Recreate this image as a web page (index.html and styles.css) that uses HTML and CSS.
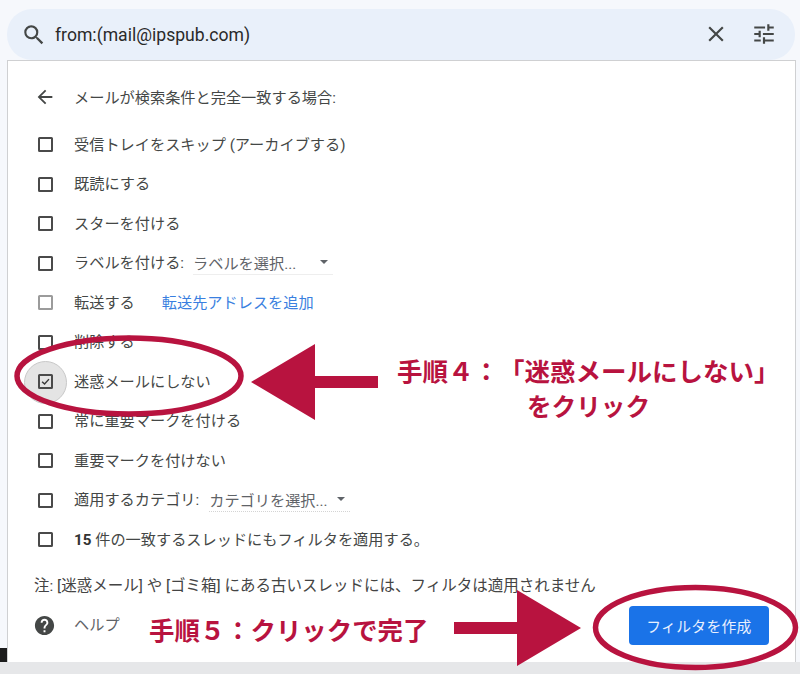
FILE: index.html
```html
<!DOCTYPE html>
<html lang="ja">
<head>
<meta charset="utf-8">
<title>フィルタを作成</title>
<link rel="stylesheet" href="styles.css">
</head>
<body>
<div class="edge"></div>
<div class="search">
  <svg class="ico-search" viewBox="0 0 24 24"><path d="M15.5 14h-.79l-.28-.27A6.47 6.47 0 0 0 16 9.5 6.5 6.5 0 1 0 9.5 16c1.61 0 3.09-.59 4.23-1.57l.27.28v.79l5 4.99L20.49 19l-4.99-5zm-6 0C7.01 14 5 11.99 5 9.5S7.01 5 9.5 5 14 7.01 14 9.5 11.99 14 9.5 14z"/></svg>
  <span class="query">from:(mail@ipspub.com)</span>
  <svg class="ico-close" viewBox="0 0 24 24"><path d="M19 6.41 17.59 5 12 10.59 6.41 5 5 6.41 10.59 12 5 17.59 6.41 19 12 13.41 17.59 19 19 17.59 13.41 12z"/></svg>
  <svg class="ico-tune" viewBox="0 0 24 24"><path d="M3 17v2h6v-2H3zM3 5v2h10V5H3zm10 16v-2h8v-2h-8v-2h-2v6h2zM7 9v2H3v2h4v2h2V9H7zm14 4v-2H11v2h10zm-6-4h2V7h4V5h-4V3h-2v6z"/></svg>
</div>
<main class="panel">
  <div class="head">
    <svg class="ico-back" viewBox="0 0 24 24"><path d="M20 11H7.83l5.59-5.59L12 4l-8 8 8 8 1.41-1.41L7.83 13H20v-2z"/></svg>
    <span>メールが検索条件と完全一致する場合:</span>
  </div>
  <ul class="rows">
    <li class="row"><span class="box"></span><span>受信トレイをスキップ (アーカイブする)</span></li>
    <li class="row"><span class="box"></span><span>既読にする</span></li>
    <li class="row"><span class="box"></span><span>スターを付ける</span></li>
    <li class="row"><span class="box"></span><span>ラベルを付ける:</span><span class="select label-select">ラベルを選択...<i class="caret"></i></span></li>
    <li class="row"><span class="box box-off"></span><span>転送する</span><span class="link">転送先アドレスを追加</span></li>
    <li class="row"><span class="box"></span><span>削除する</span></li>
    <li class="row"><span class="halo"></span><span class="box box-on"><svg viewBox="0 0 12 12"><path d="M2.3 6.2 5 8.8 9.8 3.4"/></svg></span><span>迷惑メールにしない</span></li>
    <li class="row"><span class="box"></span><span>常に重要マークを付ける</span></li>
    <li class="row"><span class="box"></span><span>重要マークを付けない</span></li>
    <li class="row"><span class="box"></span><span>適用するカテゴリ:</span><span class="select cat-select">カテゴリを選択...<i class="caret"></i></span></li>
    <li class="row"><span class="box"></span><span><b>15</b> 件の一致するスレッドにもフィルタを適用する。</span></li>
  </ul>
  <p class="note">注: [迷惑メール] や [ゴミ箱] にある古いスレッドには、フィルタは適用されません</p>
  <div class="foot">
    <svg class="ico-help" viewBox="0 0 24 24"><path d="M12 2C6.48 2 2 6.48 2 12s4.48 10 10 10 10-4.48 10-10S17.52 2 12 2zm1 17h-2v-2h2v2zm2.07-7.75-.9.92C13.45 12.9 13 13.5 13 15h-2v-.5c0-1.1.45-2.1 1.17-2.83l1.24-1.26c.37-.36.59-.86.59-1.41 0-1.1-.9-2-2-2s-2 .9-2 2H8c0-2.21 1.79-4 4-4s4 1.79 4 4c0 .88-.36 1.68-.93 2.25z"/></svg>
    <span class="help">ヘルプ</span>
    <span class="create">フィルタを作成</span>
  </div>
</main>
<div class="bottom"></div>
<svg class="marks" viewBox="0 0 800 674">
  <ellipse class="ring" cx="129" cy="376" rx="112" ry="38"/>
  <ellipse class="ring" cx="695.5" cy="627.5" rx="100" ry="40"/>
  <path class="arrow" d="M251 382 315 344V376H378V388H315V420Z"/>
  <path class="arrow" d="M581 628 517 590V622H454V634H517V666Z"/>
</svg>
<div class="step step4"><span class="step4a">手順４：「迷惑メールにしない」</span><br><span class="step4b">をクリック</span></div>
<div class="step step5">手順５：クリックで完了</div>
</body>
</html>
```
FILE: styles.css
```css
* { box-sizing: border-box; }
html, body { margin: 0; height: 674px; overflow: hidden; }
body {
  position: relative;
  background: #f6f8fc;
  padding: 9px 4px 0 7px;
  font-family: Roboto, "Noto Sans CJK JP", sans-serif;
  color: #444746;
  text-spacing-trim: space-all;
}
svg { display: block; fill: #444746; flex: none; }

.edge { position: absolute; left: 0; top: 648px; width: 7px; height: 22px; background: #1c1c1c; }

.search {
  height: 51px;
  display: flex;
  align-items: center;
  background: #e9f0fa;
  border-radius: 25px;
  padding: 0 18px 0 14px;
  margin-right: 1px;
}
.ico-search { width: 26px; height: 26px; margin-right: 8px; }
.query { font-size: 17.6px; color: #2a2a2a; flex: 1; }
.ico-close { width: 26px; height: 26px; margin-right: 22px; position: relative; top: -1px; }
.ico-tune { width: 26px; height: 26px; position: relative; top: -1px; }

.panel {
  height: 602px;
  background: #fff;
  border: 1px solid #cfd0d2;
  border-bottom: 0;
  font-size: 15.2px;
  display: flex;
  flex-direction: column;
}
.head { height: 74px; padding: 0 0 0 26px; display: flex; align-items: center; position: relative; }
.head span { margin-left: 19px; position: relative; top: -2px; }
.ico-back { width: 22px; height: 22px; margin-right: -1px; position: relative; top: -1px; }

.rows { list-style: none; margin: 0; padding: 0; position: relative; top: -12px; }
.row { height: 39.5px; display: flex; align-items: center; padding-left: 30px; position: relative; }
.box {
  width: 15px; height: 15px;
  border: 2px solid #4a4a4a;
  border-radius: 1.5px;
  margin-right: 21px;
  flex: none;
  position: relative;
  top: 2px;
}
.box-off { border-color: #9b9b9b; }
.box-on svg { width: 11px; height: 11px; fill: none; stroke: #3a3a3a; stroke-width: 1.6; }
.halo {
  position: absolute;
  left: 16px; top: 1px;
  width: 43px; height: 43px;
  border-radius: 50%;
  background: #e4e4e4;
  border: 1px solid #c8c8c8;
}
.select {
  display: flex;
  align-items: center;
  height: 25px;
  color: #5f6368;
  border-bottom: 1px solid #eeeeee;
  margin-left: 9px;
  position: relative;
  top: 1px;
}
.label-select { width: 140px; }
.cat-select { width: 141px; margin-left: 10px; border-bottom: 1px dotted #d4d4d4; }
.caret {
  width: 0; height: 0;
  border-left: 4px solid transparent;
  border-right: 4px solid transparent;
  border-top: 4px solid #5f6368;
  margin-left: auto;
  margin-right: 5px;
}
.link { color: #3a7fe0; margin-left: 27px; }
b { font-weight: 700; color: #333; }

.note { margin: 5px 0 0 26px; height: 22px; line-height: 22px; font-size: 15.5px; color: #444; white-space: nowrap; }
.foot { height: 60px; display: flex; align-items: center; padding-left: 26px; padding-right: 26px; }
.ico-help { width: 23px; height: 23px; margin-left: -1px; position: relative; top: -1px; }
.help { margin-left: 18px; color: #5f6368; position: relative; top: -4px; }
.create {
  margin-left: auto;
  width: 140px; height: 39px;
  background: #1a73e8;
  border-radius: 4px;
  color: #e8f0fe;
  font-size: 14.8px;
  letter-spacing: .3px;
  display: flex;
  align-items: center;
  justify-content: center;
  position: relative;
  top: -1px;
}
.bottom { position: absolute; left: 0; right: 0; top: 662px; height: 12px; background: #e6e7e9; }

.marks { position: absolute; left: 0; top: 0; width: 800px; height: 674px; fill: none; pointer-events: none; }
.ring { fill: none; stroke: #b8133f; stroke-width: 5.5; }
.arrow { fill: #b8133f; }
.step { position: absolute; color: #b8133f; font-weight: 700; white-space: nowrap; }
.step4 { left: 397px; top: 356px; line-height: 32px; }
.step4a { font-size: 25.5px; }
.step4b { margin-left: 130px; font-size: 24.6px; }
.step5 { left: 149px; top: 613px; font-size: 25.4px; line-height: 36px; }
```
